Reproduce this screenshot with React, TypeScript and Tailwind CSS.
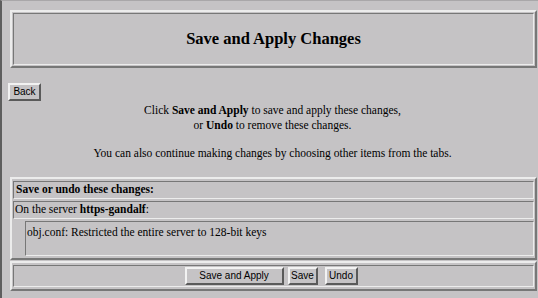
const serif = { fontFamily: '"Liberation Serif", "Times New Roman", serif' };

const Button = ({ label, className }: { label: string; className: string }) => (
  <button
    className={`h-[18px] border-2 border-t-[#f2f2f2] border-l-[#f2f2f2] border-b-[#5a5a5a] border-r-[#5a5a5a] bg-[#c5c3c5] text-[10px] leading-none text-black font-['Liberation_Sans',Arial,sans-serif] flex items-center justify-center ${className}`}
  >
    {label}
  </button>
);

export default function App() {
  return (
    <div
      className="w-[538px] h-[298px] overflow-hidden bg-[#c5c3c5] border-l-2 border-l-[#5e5e5e] border-t border-t-[#a9a7a9] text-black"
      style={serif}
    >
      <div className="pl-[8px] pt-[9px] w-[535px]">
        {/* heading */}
        <div className="border-2 border-t-[#ececec] border-l-[#ececec] border-b-[#777] border-r-[#777] p-[1px]">
          <div className="h-[52px] border border-t-[#777] border-l-[#777] border-b-[#ececec] border-r-[#ececec] flex items-center justify-center">
            <h1 className="text-[16.5px] font-bold">Save and Apply Changes</h1>
          </div>
        </div>

        <div className="mt-[15px] -ml-[2px]">
          <Button label="Back" className="w-[33px]" />
        </div>

        <div className="mt-[2px] text-center text-[11.5px] leading-[15px] pr-[2px]">
          <p>
            Click <b>Save and Apply</b> to save and apply these changes,
            <br />
            or <b>Undo</b> to remove these changes.
          </p>
          <p className="mt-[13px]">You can also continue making changes by choosing other items from the tabs.</p>
        </div>

        {/* changes list */}
        <div className="mt-[16px] border-2 border-t-[#ececec] border-l-[#ececec] border-b-[#777] border-r-[#777] px-[1px] py-[2px] flex flex-col gap-[2px] text-[11.5px]">
          <div className="h-[18px] border border-t-[#777] border-l-[#777] border-b-[#ececec] border-r-[#ececec] pl-[2px] flex items-center font-bold">
            Save or undo these changes:
          </div>
          <div className="h-[18px] border border-t-[#777] border-l-[#777] border-b-[#ececec] border-r-[#ececec] pl-[1px] flex items-center">
            <span>
              On the server <b>https-gandalf</b>:
            </span>
          </div>
          <div className="pl-[12px]">
            <div className="h-[35px] border border-t-[#777] border-l-[#777] border-b-[#ececec] border-r-[#ececec] pl-[1px] pt-[3px] leading-[15px]">
              obj.conf: Restricted the entire server to 128-bit keys
            </div>
          </div>
        </div>

        {/* actions */}
        <div className="mt-[1px] border-2 border-t-[#ececec] border-l-[#ececec] border-b-[#777] border-r-[#777] px-[1px] py-[2px]">
          <div className="h-[22px] border border-t-[#777] border-l-[#777] border-b-[#ececec] border-r-[#ececec] flex items-center justify-center pr-[5px]">
            <Button label="Save and Apply" className="w-[99px]" />
            <Button label="Save" className="w-[30px] ml-[4px]" />
            <Button label="Undo" className="w-[33px] ml-[7px]" />
          </div>
        </div>
      </div>
    </div>
  );
}
